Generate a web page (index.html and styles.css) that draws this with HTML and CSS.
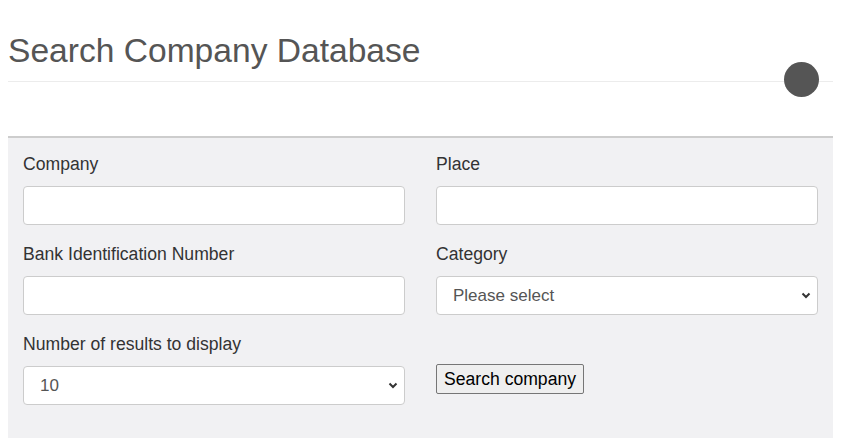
FILE: index.html
```html
<!DOCTYPE html>
<html>
<head>
<meta charset="utf-8">
<link rel="stylesheet" href="styles.css">
</head>
<body>
<header class="page-header">
  <h1 class="title">Search Company Database</h1>
  <div class="divider"></div>
  <span class="avatar"></span>
</header>
<form class="panel">
  <div class="field">
    <label class="label">Company</label>
    <input class="control" type="text">
  </div>
  <div class="field">
    <label class="label">Place</label>
    <input class="control" type="text">
  </div>
  <div class="field">
    <label class="label">Bank Identification Number</label>
    <input class="control" type="text">
  </div>
  <div class="field">
    <label class="label">Category</label>
    <div class="select-wrap">
      <select class="control select"><option>Please select</option></select>
      <svg class="chev" width="10" height="7" viewBox="0 0 10 7"><path d="M1.5 1.5 L5 5 L8.5 1.5" fill="none" stroke="#333" stroke-width="2"/></svg>
    </div>
  </div>
  <div class="field">
    <label class="label">Number of results to display</label>
    <div class="select-wrap">
      <select class="control select"><option>10</option></select>
      <svg class="chev" width="10" height="7" viewBox="0 0 10 7"><path d="M1.5 1.5 L5 5 L8.5 1.5" fill="none" stroke="#333" stroke-width="2"/></svg>
    </div>
  </div>
  <div class="field">
    <span class="label">&nbsp;</span>
    <div><button class="btn" type="button">Search company</button></div>
  </div>
</form>
</body>
</html>
```
FILE: styles.css
```css
body {
  margin: 8px;
  font-family: "Liberation Sans", Arial, sans-serif;
  background: #fff;
}
.page-header {
  position: relative;
  width: 825px;
  padding-top: 23px;
}
.title {
  margin: 0 0 10px 0;
  font-size: 33.6px;
  line-height: 40px;
  font-weight: normal;
  color: #555;
}
.divider {
  height: 1px;
  background: #ececec;
}
.avatar {
  position: absolute;
  left: 776px;
  top: 54px;
  width: 35px;
  height: 35px;
  border-radius: 50%;
  background: #555;
}
.panel {
  margin-top: 54px;
  width: 825px;
  box-sizing: border-box;
  border-top: 2px solid #cdcdcd;
  background: #f1f1f3;
  padding: 14px 15px 16px 15px;
  display: grid;
  grid-template-columns: 382px 382px;
  column-gap: 31px;
}
.field {
  display: flex;
  flex-direction: column;
  padding-bottom: 17px;
}
.label {
  font-size: 17.6px;
  line-height: 24px;
  color: #333;
  margin-bottom: 10px;
}
.control {
  box-sizing: border-box;
  width: 100%;
  height: 39px;
  border: 1px solid #ccc;
  border-radius: 4px;
  background: #fff;
  margin: 0;
  font-family: "Liberation Sans", Arial, sans-serif;
  font-size: 17px;
  color: #555;
  padding: 0 16px;
}
.select-wrap {
  position: relative;
}
.select {
  appearance: none;
  -webkit-appearance: none;
}
.chev {
  position: absolute;
  right: 7px;
  top: 16px;
}
.btn {
  margin-top: -2px;
  height: 30px;
  padding: 0 7px;
  font-family: "Liberation Sans", Arial, sans-serif;
  font-size: 17.6px;
  color: #000;
  background: #efefef;
  border: 1px solid #767676;
  border-radius: 2px;
}
```
